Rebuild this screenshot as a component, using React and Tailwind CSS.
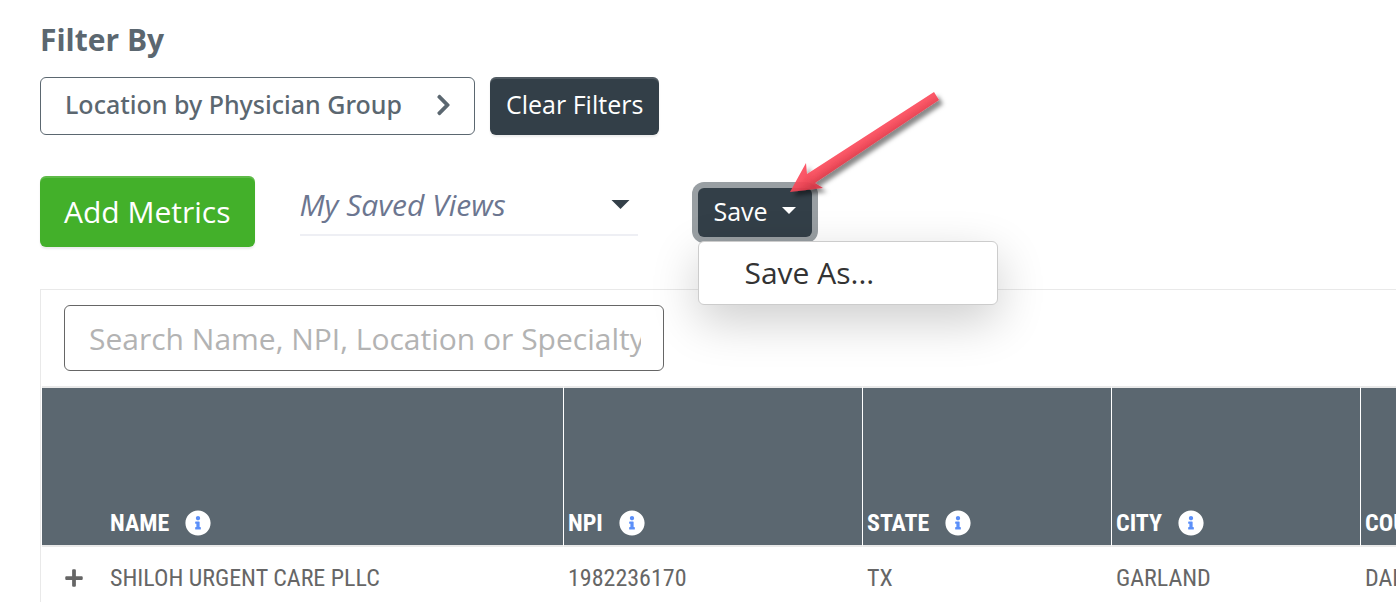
import React, { useState } from 'react';
import { FaChevronRight, FaInfoCircle, FaPlus } from 'react-icons/fa';

const columns = [
    { key: 'name', label: 'NAME', width: 'w-[522px]' },
    { key: 'npi', label: 'NPI', width: 'w-[299px]' },
    { key: 'state', label: 'STATE', width: 'w-[249px]' },
    { key: 'city', label: 'CITY', width: 'w-[249px]' },
    { key: 'county', label: 'COUNTY', width: 'w-[249px]' },
];

const providers = [
    { name: 'SHILOH URGENT CARE PLLC', npi: '1982236170', state: 'TX', city: 'GARLAND', county: 'DALLAS' },
];

const Caret = ({ className }) => (
    <svg viewBox="0 0 20 10" className={className} fill="currentColor" aria-hidden="true">
        <path d="M0 0h20L10 10z" />
    </svg>
);

const Arrow = () => (
    <svg
        viewBox="0 0 160 110"
        className="absolute -top-24 left-[92px] z-20 h-[110px] w-[160px] overflow-visible pointer-events-none"
        aria-hidden="true"
    >
        <defs>
            <linearGradient id="arrowFill" gradientUnits="userSpaceOnUse" x1="78" y1="44" x2="85" y2="55">
                <stop offset="0" stopColor="#fb4a5b" />
                <stop offset="0.5" stopColor="#f14454" />
                <stop offset="1" stopColor="#d93848" />
            </linearGradient>
            <filter id="arrowShadow" x="-10%" y="-10%" width="130%" height="130%">
                <feDropShadow dx="4" dy="4" stdDeviation="2" floodColor="#000" floodOpacity="0.5" />
            </filter>
        </defs>
        <path
            d="M144 0l5 8L25 91l8 5-33 4 16-29 1 11z"
            fill="url(#arrowFill)"
            fillOpacity="0.92"
            filter="url(#arrowShadow)"
        />
    </svg>
);

const FilterBar = () => (
    <section>
        <h2 className="text-[30px] leading-10 font-bold text-[#5b6770]">Filter By</h2>
        <div className="mt-[17px] flex items-center gap-[15px]">
            <button className="flex h-[58px] w-[435px] items-center justify-between rounded-md border border-[#5b6770] bg-white pr-[23px] pb-0.5 pl-6 font-['Noto_Sans','Open_Sans',sans-serif] text-[25px] font-medium text-[#5b6770]">
                Location by Physician Group
                <FaChevronRight className="h-6 w-[15px]" />
            </button>
            <button className="h-[58px] rounded-md bg-[#333f48] px-4 pb-0.5 text-[25px] text-white shadow-[inset_0_2px_0_rgba(255,255,255,0.15),0_2px_2px_rgba(0,0,0,0.08)]">
                Clear Filters
            </button>
        </div>
    </section>
);

const ActionBar = () => {
    const [menuOpen, setMenuOpen] = useState(true);

    return (
        <section className="mt-[41px] flex items-start">
            <button className="h-[71px] rounded-md bg-[#43b02a] px-6 text-[30px] text-white shadow-[inset_0_2px_0_rgba(255,255,255,0.15),0_2px_2px_rgba(0,0,0,0.08)]">
                Add Metrics
            </button>

            <div className="relative ml-[45px] w-[338px]">
                <select
                    aria-label="My Saved Views"
                    className="h-[60px] w-full appearance-none border-b-2 border-[#eeeff4] bg-transparent pb-0.5 text-[30px] text-[#6c7690] italic outline-none"
                >
                    <option>My Saved Views</option>
                </select>
                <Caret className="absolute top-6 right-2 h-[9px] w-[19px] text-[#333f48] pointer-events-none" />
            </div>

            <div className="relative mt-3 ml-[60px]">
                <button
                    onClick={() => setMenuOpen(!menuOpen)}
                    aria-expanded={menuOpen}
                    className="flex h-[49px] items-center gap-[14px] rounded-md bg-[#333f48] px-4 pb-0.5 text-[25px] text-white ring-6 ring-[#999fa3]"
                >
                    Save
                    <Caret className="mb-0.5 h-[7px] w-[14px]" />
                </button>
                {menuOpen && (
                    <div className="absolute top-full left-0 z-10 mt-1 w-[300px] rounded-md border border-[#cccccc] bg-white py-2 shadow-[0_16px_48px_rgba(0,0,0,0.2)]">
                        <button className="block w-full px-[46px] text-left text-[30px] leading-[46px] text-[#333333]">
                            Save As...
                        </button>
                    </div>
                )}
                <Arrow />
            </div>
        </section>
    );
};

const ProviderTable = () => {
    const [search, setSearch] = useState('');
    const rows = providers.filter((p) => p.name.toLowerCase().includes(search.toLowerCase()));

    return (
        <section className="mt-[42px] -mr-10 overflow-hidden border-t border-l border-[#e9e9e9] pl-px">
            <div className="px-[22px] py-[15px]">
                <input
                    type="text"
                    aria-label="Search providers"
                    placeholder="Search Name, NPI, Location or Specialty"
                    value={search}
                    onChange={(e) => setSearch(e.target.value)}
                    className="h-[66px] w-[600px] rounded-md border border-[#666666] bg-white pr-[22px] pl-6 text-[30px] text-[#333333] placeholder-[#b3b3b3]"
                />
            </div>
            <table className="w-[1568px] table-fixed border-separate border-spacing-0 font-['Roboto_Condensed','Liberation_Sans_Narrow',Roboto,sans-serif]">
                <thead>
                    <tr className="bg-[#5b6770] text-white">
                        {columns.map((col) => (
                            <th
                                key={col.key}
                                className={`${col.width} h-[161px] border-y-2 border-r border-y-[#e9e9e9] border-r-white px-1 pb-[6px] text-left align-bottom text-2xl font-bold first:pl-[68px]`}
                            >
                                <span className="flex items-center gap-4">
                                    {col.label}
                                    <span className="rounded-full bg-[radial-gradient(#5b8ff9_50%,transparent_50%)]">
                                        <FaInfoCircle className="h-[26px] w-[26px]" />
                                    </span>
                                </span>
                            </th>
                        ))}
                    </tr>
                </thead>
                <tbody>
                    {rows.map((p) => (
                        <tr key={p.npi} className="h-[62px] text-2xl text-[#666666]">
                            <td className="pl-[22px]">
                                <span className="flex items-center gap-[26px]">
                                    <button aria-label="Expand row">
                                        <FaPlus className="h-5 w-5" />
                                    </button>
                                    {p.name}
                                </span>
                            </td>
                            <td className="px-1">{p.npi}</td>
                            <td className="px-1">{p.state}</td>
                            <td className="px-1">{p.city}</td>
                            <td className="px-1">{p.county}</td>
                        </tr>
                    ))}
                </tbody>
            </table>
        </section>
    );
};

const App = () => (
    <div className="h-screen overflow-hidden bg-white px-10 pt-5 font-['Open_Sans','Noto_Sans',sans-serif]">
        <FilterBar />
        <ActionBar />
        <ProviderTable />
    </div>
);

export default App;
